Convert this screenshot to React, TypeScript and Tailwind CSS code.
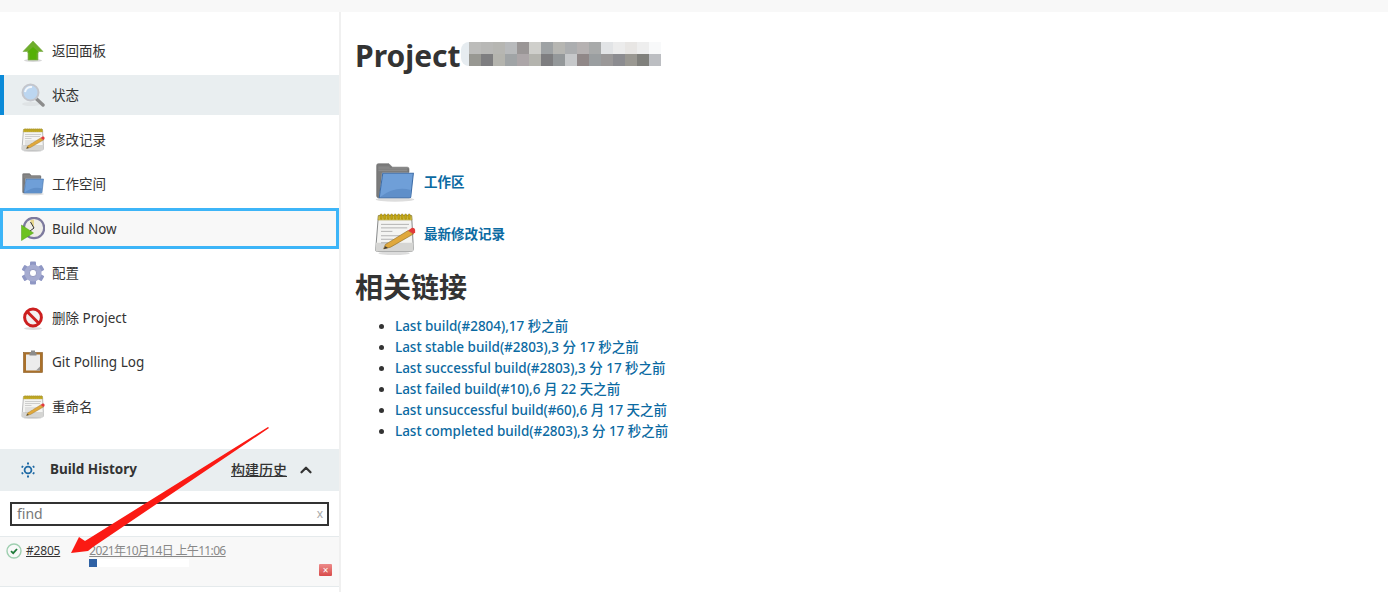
import React from "react";
import { ChevronUp } from "lucide-react";

const font = "font-['Noto_Sans','Noto_Sans_CJK_SC',sans-serif]";

const ArrowUpIcon = () => (
  <svg viewBox="0 0 24 24" className="size-6">
    <ellipse cx="12" cy="21.5" rx="9" ry="1.5" fill="#d8d8d8" />
    <path d="M12 2 L22 12.5 H17 V21 H7 V12.5 H2 Z" fill="#6fae2c" stroke="#7aa94a" strokeWidth="0.6" />
    <path d="M12 8 L18 13.5 H15.5 V20.5 H8.5 V13.5 H6 Z" fill="#55b005" />
  </svg>
);

const SearchIcon = () => (
  <svg viewBox="0 0 24 24" className="size-6">
    <ellipse cx="10" cy="21" rx="9" ry="2" fill="#dfe3e5" />
    <path d="M14.5 15 L22 22" stroke="#8c8c8c" strokeWidth="3.4" strokeLinecap="round" />
    <circle cx="9.5" cy="9.5" r="8" fill="#bcd6f0" stroke="#c4c6cc" strokeWidth="2" />
    <path d="M4 9 a6 6 0 0 1 7 -5" stroke="#f2f7fc" strokeWidth="2" fill="none" />
  </svg>
);

const NotepadIcon = ({ className }: { className: string }) => (
  <svg viewBox="0 0 48 48" className={className}>
    <ellipse cx="23" cy="46" rx="18" ry="2" fill="#dcdcdc" />
    <path d="M5 3 H43 L45 41 Q45 44 42 44 H4 Q1 44 2 41 Z" fill="#f4f4f2" stroke="#77797a" strokeWidth="1" />
    <path d="M2 34 H45 V41 Q45 44 42 44 H4 Q1 44 2 41 Z" fill="#d5d5d3" />
    <path d="M5 3 H43 L43.4 8 H4.6 Z" fill="#d9c64a" stroke="#a08a20" strokeWidth="0.6" />
    {[8, 12, 16, 20, 24, 28, 32, 36, 40].map((x) => (
      <rect key={x} x={x - 1} y="1" width="2.4" height="6" rx="1" fill="#c9a90f" stroke="#7c6a10" strokeWidth="0.4" />
    ))}
    <path d="M8 13 H40 M8 17 H38 M8 21 H21 M8 26 H30 M8 30 H22 M8 34 H16" stroke="#a9a9a9" strokeWidth="1" />
    <path d="M13 36 L39 20 L45 24 L19 39 L11 41 Z" fill="#e0a83c" stroke="#8a6a22" strokeWidth="0.7" />
    <path d="M39 20 L43 17 Q46 16 47 19 L47 22 L45 24 Z" fill="#e23a3a" />
    <path d="M13 38 L11 41 L16 40 Z" fill="#3a3a3a" />
  </svg>
);

const FolderIcon = ({ className }: { className: string }) => (
  <svg viewBox="0 0 48 48" className={className}>
    <ellipse cx="24" cy="44" rx="22" ry="2.5" fill="#dddddd" />
    <path d="M3 5 Q3 3 5 3 H17 L21 7 H38 Q40 7 40 9 V13 H9 L6 42 H5 Q3 42 3 40 Z" fill="#7b7b7b" stroke="#666666" strokeWidth="0.6" />
    <path d="M5 7 H18 M5 9 H38 M5 11 H38" stroke="#9a9a9a" strokeWidth="0.7" />
    <path d="M10 14 H45 L42 41 Q42 42 40 42 H6 Z" fill="#6f9fd8" stroke="#3f6ea8" strokeWidth="1.2" />
    <path d="M7 41 Q24 28 42 33 L41.5 41 Z" fill="#5f8fc9" />
  </svg>
);

const ClockIcon = () => (
  <svg viewBox="0 0 24 24" className="size-6">
    <circle cx="13" cy="11" r="10.2" fill="#eeede8" stroke="#7d7a9e" strokeWidth="2.2" />
    <path d="M13 11 L9 3.5 A8 8 0 0 1 13 2.5 Z" fill="#e8d890" />
    <path d="M13 11 L9.5 5 M13 11 L9 14" stroke="#333333" strokeWidth="1" />
    <path d="M0.5 8 L12.5 16 L0.5 23.5 Z" fill="#6dc221" stroke="#4f9a14" strokeWidth="0.5" />
  </svg>
);

const GearIcon = () => (
  <svg viewBox="0 0 24 24" className="size-6">
    <g fill="#8f97c4">
      {[0, 60, 120].map((a) => (
        <rect key={a} x="9" y="0.5" width="6" height="23" rx="1" transform={`rotate(${a} 12 12)`} />
      ))}
    </g>
    <circle cx="12" cy="12" r="8.6" fill="#a5abd0" />
    <circle cx="12" cy="12" r="3.6" fill="#ffffff" stroke="#6e76a6" strokeWidth="0.6" />
  </svg>
);

const NoEntryIcon = () => (
  <svg viewBox="0 0 24 24" className="size-6">
    <ellipse cx="12" cy="22.5" rx="9" ry="1.4" fill="#dddddd" />
    <circle cx="12" cy="11.5" r="8.4" fill="#f4f0f0" stroke="#cc1f1f" strokeWidth="3" />
    <path d="M6 5.5 L18 17.5" stroke="#cc1f1f" strokeWidth="3" />
  </svg>
);

const ClipboardIcon = () => (
  <svg viewBox="0 0 24 24" className="size-6">
    <rect x="2.5" y="2.5" width="19" height="20" fill="#a9702a" stroke="#8a5a20" strokeWidth="0.6" />
    <path d="M5 4.5 H19 V20.5 H5 Z" fill="#ececec" />
    <path d="M15 20.5 L19 16.5 V20.5 Z" fill="#9a9a9a" />
    <path d="M8.5 2.5 H10 V0.5 H14 V2.5 H15.5 V5.5 H8.5 Z" fill="#8c8c8c" />
  </svg>
);

const BuildGearIcon = () => (
  <svg viewBox="0 0 16 16" className="size-4" fill="none" stroke="#1f6aa5">
    <circle cx="8" cy="8" r="3.4" strokeWidth="1.8" />
    <path d="M8 0.6 V2.6 M8 13.4 V15.4 M1.6 4.3 L3.2 5.2 M12.8 10.8 L14.4 11.7 M1.6 11.7 L3.2 10.8 M12.8 5.2 L14.4 4.3" strokeWidth="2" />
  </svg>
);

const SuccessIcon = () => (
  <svg viewBox="0 0 16 16" className="size-4 shrink-0" fill="none">
    <circle cx="8" cy="8" r="7" stroke="#9fcfb0" strokeWidth="1.4" />
    <path d="M5 8.2 L7.2 10.2 L11 6" stroke="#1f7a3a" strokeWidth="1.8" />
  </svg>
);

const navItems = [
  { label: "返回面板", icon: <ArrowUpIcon /> },
  { label: "状态", icon: <SearchIcon />, active: true },
  { label: "修改记录", icon: <NotepadIcon className="size-6" /> },
  { label: "工作空间", icon: <FolderIcon className="size-6" /> },
  { label: "Build Now", icon: <ClockIcon />, focused: true },
  { label: "配置", icon: <GearIcon /> },
  { label: "删除 Project", icon: <NoEntryIcon /> },
  { label: "Git Polling Log", icon: <ClipboardIcon /> },
  { label: "重命名", icon: <NotepadIcon className="size-6" /> },
];

const links = [
  "Last build(#2804),17 秒之前",
  "Last stable build(#2803),3 分 17 秒之前",
  "Last successful build(#2803),3 分 17 秒之前",
  "Last failed build(#10),6 月 22 天之前",
  "Last unsuccessful build(#60),6 月 17 天之前",
  "Last completed build(#2803),3 分 17 秒之前",
];

const mosaicTop = ["#bcbcba", "#b8b8b6", "#b6b6b2", "#b8babc", "#9a9696", "#cfcfcb", "#9ea2a4", "#b6b6b2", "#acaeb0", "#b6b2b2", "#a8aaaa", "#e2e4e6", "#ececec", "#e8e6e4", "#eeeeee", "#f8f9fa"];
const mosaicBottom = ["#989892", "#7e7e80", "#b4b4ae", "#a0a4a6", "#aca6a8", "#b4b4ae", "#7e7e80", "#94989a", "#c6c8ca", "#908888", "#9a9ea0", "#9a9898", "#8c8c90", "#9a9892", "#80807c", "#bcbec2"];

const Sidebar = () => (
  <aside className="w-[341px] shrink-0 border-r-2 border-[#f0f0f0] pt-[18.95px]">
    <nav className="flex flex-col gap-[4.5px]">
      {navItems.map((item) => (
        <a
          key={item.label}
          className={
            item.active
              ? "flex h-10 items-center gap-[7px] border-l-4 border-[#0b8ad8] bg-[#e9eef0] pl-[17px] text-[13.5px] text-[#333]"
              : item.focused
                ? "-my-[0.5px] flex h-[41px] items-center gap-[7px] border-[3px] border-[#3db5f8] bg-[#f8f8f8] pl-[18px] text-[13.5px] text-[#333]"
                : "flex h-10 items-center gap-[7px] pl-[21px] text-[13.5px] text-[#333]"
          }
        >
          {item.icon}
          <span>{item.label}</span>
        </a>
      ))}
    </nav>

    <div className="mt-[21.65px] flex h-[42px] items-center bg-[#e9eef0] pl-5 pr-[24px]">
      <BuildGearIcon />
      <span className="ml-[14px] text-[13.5px] font-bold text-[#333]">Build History</span>
      <a className="ml-auto text-[14px] font-medium text-[#333] underline">构建历史</a>
      <ChevronUp className="ml-[10px] size-[18px] text-[#333]" strokeWidth={3} />
    </div>

    <div className="pt-[11px] pb-[10px] pl-[10px] pr-[10px]">
      <div className="flex h-[24px] items-center justify-between border-2 border-[#333] pl-[5px] pr-1 text-[14px] text-[#777]">
        <span>find</span>
        <span className="text-[12px] text-[#aaa]">x</span>
      </div>
    </div>

    <div className="flex h-[51px] border-y border-[#e5eaec] bg-[#f8f8f8] pl-[6px] pr-[7px] pt-[6px]">
      <SuccessIcon />
      <a className="ml-1 text-[12px] leading-4 tracking-[-0.2px] text-[#333] underline">#2805</a>
      <div className="ml-[29px] flex flex-col">
        <a className="text-[12px] leading-4 tracking-[-0.65px] text-[#888] underline">2021年10月14日 上午11:06</a>
        <div className="h-2 w-[100px] bg-white">
          <div className="h-2 w-2 bg-[#2f62a5]" />
        </div>
      </div>
      <div className="ml-auto mt-[21px] flex h-3 w-[13px] items-center justify-center rounded-[1px] bg-linear-to-b from-[#ec8a8a] to-[#d84a4a] text-[10px] leading-none text-white">×</div>
    </div>
  </aside>
);

export default function App() {
  return (
    <div className={`relative h-[592px] w-[1388px] overflow-hidden bg-white ${font}`}>
      <div className="h-3 bg-[#f8f8f8]" />
      <div className="flex h-[580px]">
        <Sidebar />
        <main className="pl-[14px]">
          <h1 className="mt-[21px] flex h-11 items-center text-[30px] font-bold text-[#333]">
            Project
            <span className="-mt-[3px] block h-6 w-2 rounded-l-full bg-[#e6ecf0]" />
            <span className="-mt-[3px] inline-grid grid-cols-[repeat(16,12px)] grid-rows-[repeat(2,12px)]">
              {mosaicTop.concat(mosaicBottom).map((c, i) => (
                <span key={i} className="block size-3" style={{ backgroundColor: c }} />
              ))}
            </span>
          </h1>

          <div className="mt-[83px] ml-[19px] flex flex-col gap-[8px]">
            <a className="flex h-[44px] items-center gap-[8px] text-[13.5px] font-bold text-[#0b6aa2]">
              <FolderIcon className="size-[42px]" />
              <span>工作区</span>
            </a>
            <a className="flex h-[44px] items-center gap-[8px] text-[13.5px] font-bold text-[#0b6aa2]">
              <NotepadIcon className="size-[42px]" />
              <span>最新修改记录</span>
            </a>
          </div>

          <h2 className="mt-[12px] text-[28px] leading-[38px] font-bold text-[#333]">相关链接</h2>

          <ul className="mt-[10px] list-disc pl-10 text-[13.5px] leading-[21px] font-medium tracking-[-0.03px] text-[#0b6aa2] marker:text-[#333]">
            {links.map((l) => (
              <li key={l}>{l}</li>
            ))}
          </ul>
        </main>
      </div>

      <svg className="pointer-events-none absolute inset-0 size-full" viewBox="0 0 1388 592">
        <polygon points="71,553 79,537 85,541 268,427 269,428 93,547 88,551" fill="#fb1a14" />
      </svg>
    </div>
  );
}
